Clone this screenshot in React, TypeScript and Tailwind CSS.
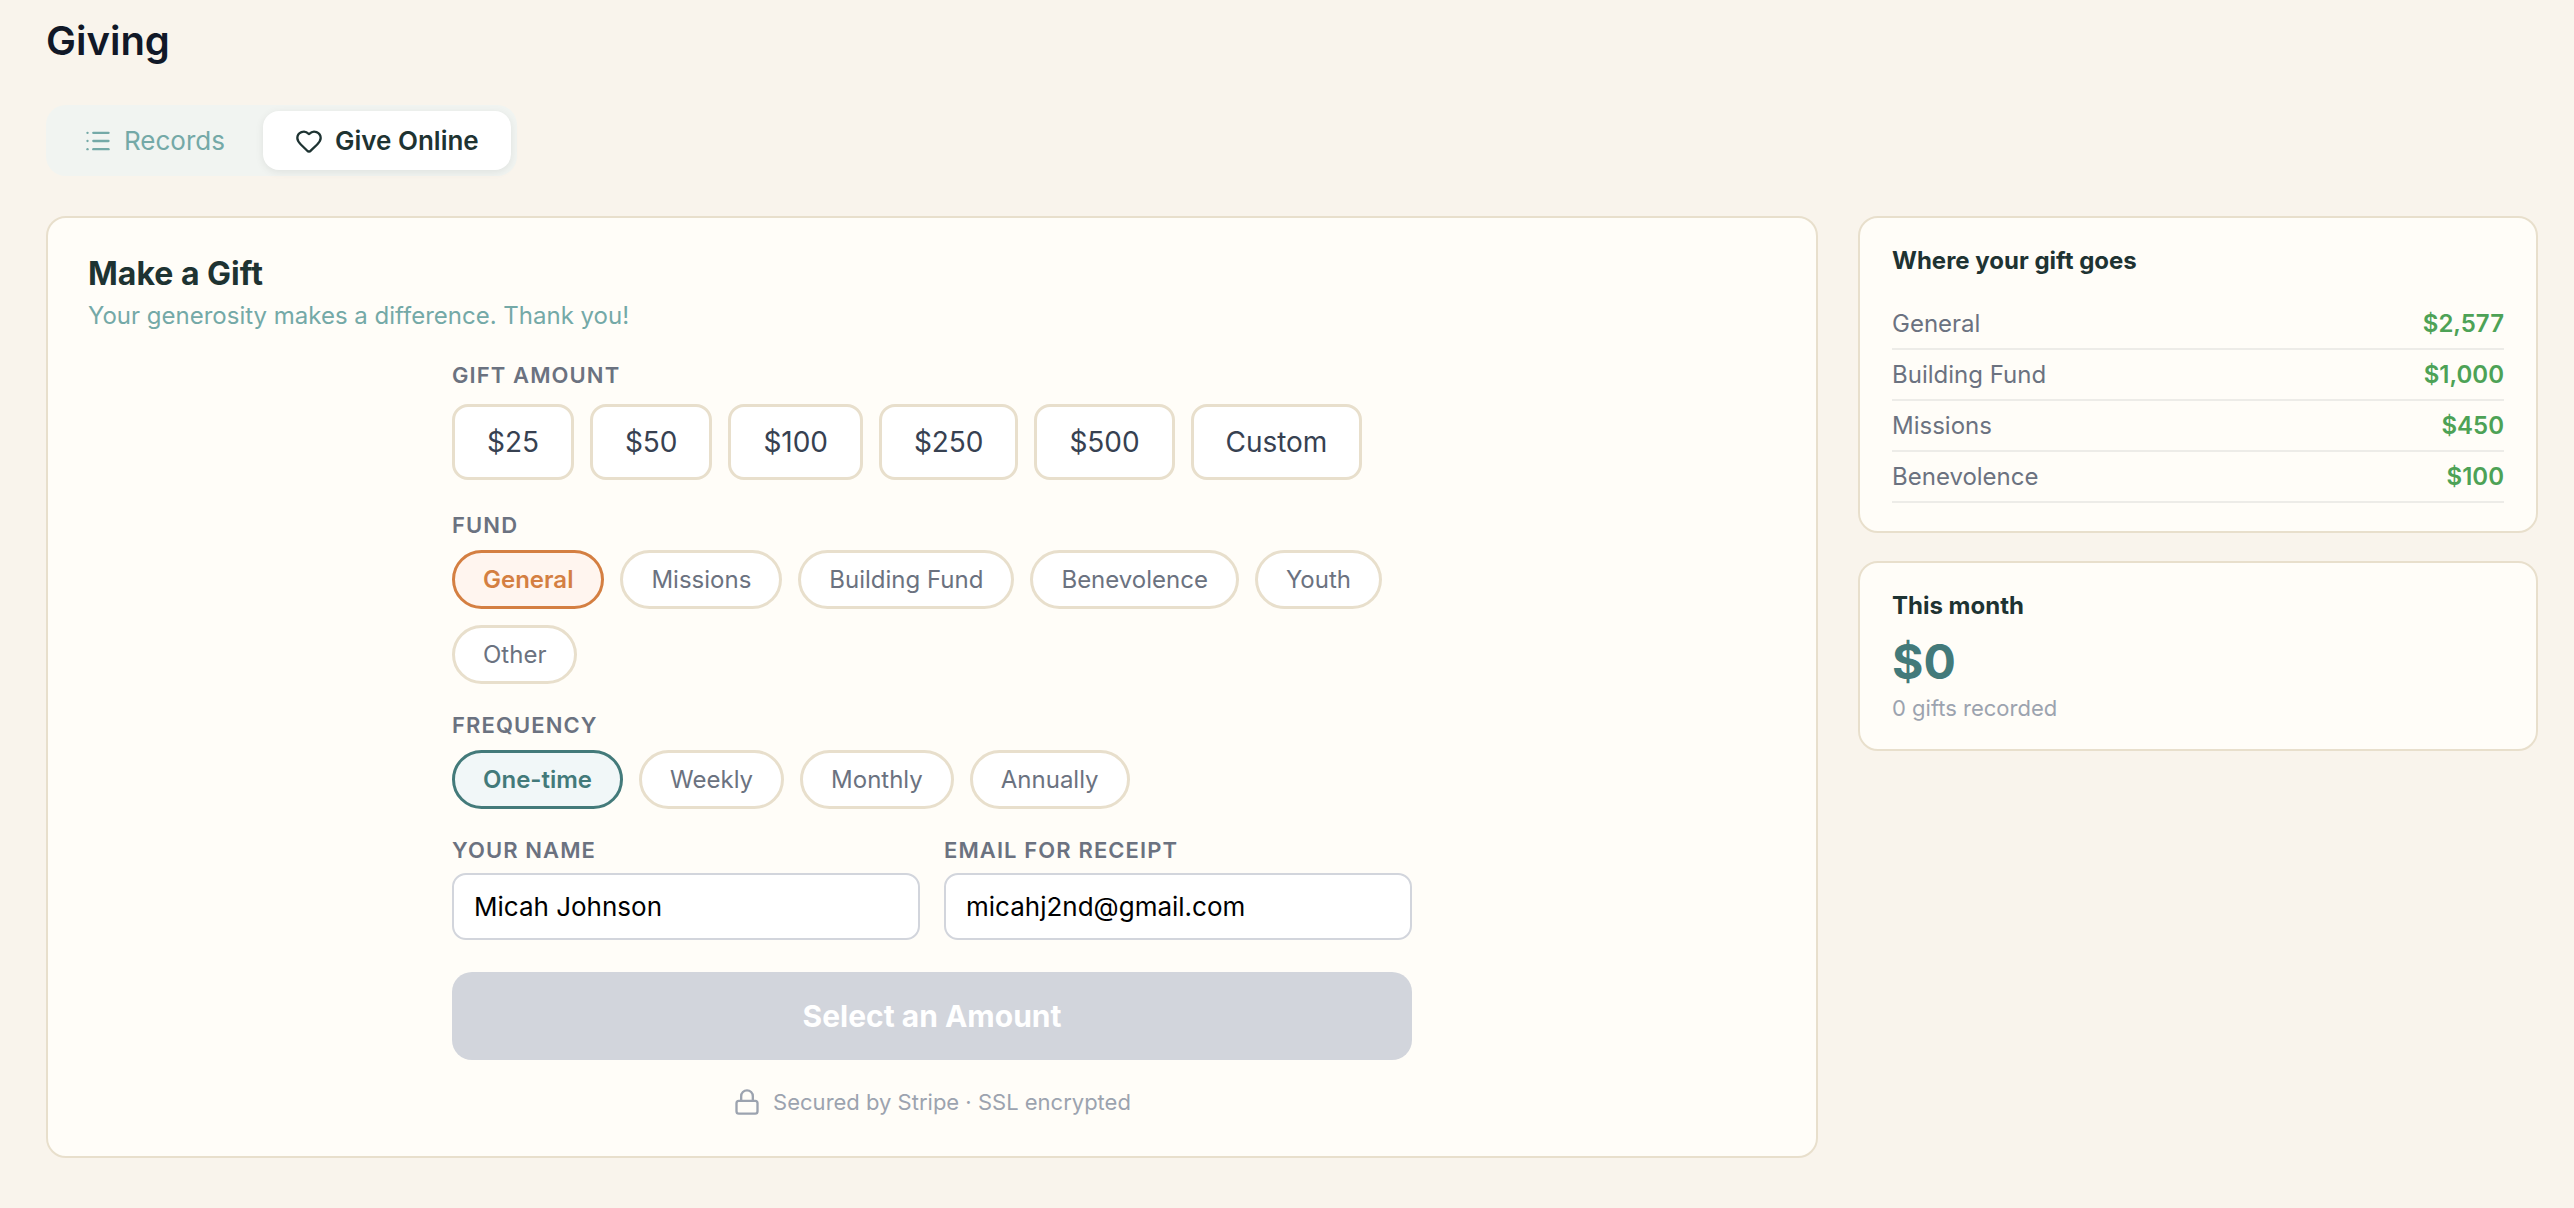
import { useState } from "react";
import { clsx } from "clsx";
import { Heart, List, Lock } from "lucide-react";

const amounts = ["$25", "$50", "$100", "$250", "$500", "Custom"];
const funds = ["General", "Missions", "Building Fund", "Benevolence", "Youth", "Other"];
const frequencies = ["One-time", "Weekly", "Monthly", "Annually"];

const fundTotals = [
  { name: "General", total: "$2,577" },
  { name: "Building Fund", total: "$1,000" },
  { name: "Missions", total: "$450" },
  { name: "Benevolence", total: "$100" },
];

function Label({ children }: { children: string }) {
  return (
    <div className="text-[22px] leading-[26px] font-semibold uppercase tracking-[0.05em] text-[#6b7280]">
      {children}
    </div>
  );
}

function Pill({ label, active, tone, onClick }: { label: string; active: boolean; tone: "orange" | "teal"; onClick: () => void }) {
  return (
    <button
      onClick={onClick}
      className={clsx(
        "h-[59px] rounded-full border-[3px] px-7 text-2xl leading-[29px]",
        !active && "border-[#e8dfcc] bg-white text-[#6b7280]",
        active && tone === "orange" && "border-[#d47f42] bg-[#fff5ef] font-semibold text-[#d47f42]",
        active && tone === "teal" && "border-[#437a7a] bg-[#f1f7f8] font-semibold text-[#437a7a]",
      )}
    >
      {label}
    </button>
  );
}

export default function App() {
  const [amount, setAmount] = useState("");
  const [fund, setFund] = useState("General");
  const [frequency, setFrequency] = useState("One-time");
  const [name, setName] = useState("Micah Johnson");
  const [email, setEmail] = useState("micahj2nd@gmail.com");

  return (
    <div className="min-h-screen bg-[#f9f4ec] pt-[17px] pr-9 pl-[46px] font-['Inter',sans-serif] [font-optical-sizing:none]">
      <h1 className="text-[40px] leading-[48px] font-semibold text-[#111827]">Giving</h1>

      {/* Tabs */}
      <div className="mt-10 flex w-fit gap-1.5 rounded-[20px] bg-[#f1f4f1] p-1.5">
        <button className="flex h-[59px] items-center gap-3 rounded-2xl px-8 text-[26px] text-[#74a9a7]">
          <List size={28} />
          Records
        </button>
        <button className="flex h-[59px] items-center gap-3 rounded-2xl bg-white px-8 text-[26px] font-semibold text-[#1e3332] shadow-[0_2px_8px_rgba(0,0,0,0.08)]">
          <Heart size={28} />
          Give Online
        </button>
      </div>

      <div className="mt-10 flex items-start gap-10">
        {/* Gift form */}
        <section className="h-[942px] w-[1772px] rounded-[20px] border-2 border-[#e8dfcc] bg-[#fffdf8] px-10 pt-9">
          <h2 className="text-[32px] leading-[39px] font-bold text-[#1e3332]">Make a Gift</h2>
          <p className="mt-2 text-2xl leading-[29px] text-[#74a9a7]">Your generosity makes a difference. Thank you!</p>

          <div className="mx-auto mt-8 w-[960px]">
            <Label>Gift Amount</Label>
            <div className="mt-4 flex gap-4">
              {amounts.map((a) => (
                <button
                  key={a}
                  onClick={() => setAmount(a)}
                  className="h-[76px] rounded-2xl border-[3px] border-[#e8dfcc] bg-white px-8 text-[28px] tracking-[-0.05px] text-[#374151]"
                >
                  {a}
                </button>
              ))}
            </div>

            <div className="mt-8">
              <Label>Fund</Label>
              <div className="mt-3 flex flex-wrap gap-4">
                {funds.map((f) => (
                  <Pill key={f} label={f} tone="orange" active={f === fund} onClick={() => setFund(f)} />
                ))}
              </div>
            </div>

            <div className="mt-7">
              <Label>Frequency</Label>
              <div className="mt-3 flex gap-4">
                {frequencies.map((f) => (
                  <Pill key={f} label={f} tone="teal" active={f === frequency} onClick={() => setFrequency(f)} />
                ))}
              </div>
            </div>

            <div className="mt-7 grid grid-cols-2 gap-6">
              <div>
                <Label>Your Name</Label>
                <input
                  value={name}
                  onChange={(e) => setName(e.target.value)}
                  className="mt-2.5 block h-[67px] w-full rounded-[14px] border-2 border-[#d2d5dc] bg-white px-5 text-[26px] text-black"
                />
              </div>
              <div>
                <Label>Email for Receipt</Label>
                <input
                  value={email}
                  onChange={(e) => setEmail(e.target.value)}
                  className="mt-2.5 block h-[67px] w-full rounded-[14px] border-2 border-[#d2d5dc] bg-white px-5 text-[26px] text-black"
                />
              </div>
            </div>

            <button className="mt-8 block h-[88px] w-full rounded-[20px] bg-[#d2d5dc] text-[30px] font-bold text-white">
              {amount ? `Give ${amount}` : "Select an Amount"}
            </button>

            <div className="mt-7 flex items-center justify-center gap-3 text-[22px] leading-7 text-[#9ca3af]">
              <Lock size={28} />
              Secured by Stripe · SSL encrypted
            </div>
          </div>
        </section>

        {/* Sidebar */}
        <aside className="flex w-[680px] flex-col gap-7">
          <section className="rounded-[20px] border-2 border-[#e8dfcc] bg-[#fffdf8] px-8 py-7">
            <h3 className="mb-6 text-2xl leading-[29px] font-bold text-[#1e3332]">Where your gift goes</h3>
            {fundTotals.map((row) => (
              <div key={row.name} className="flex justify-between border-b-2 border-[#edece8] py-2.5 text-2xl leading-[29px]">
                <span className="text-[#6b7280]">{row.name}</span>
                <span className="font-semibold text-[#4da256]">{row.total}</span>
              </div>
            ))}
          </section>

          <section className="h-[190px] rounded-[20px] border-2 border-[#e8dfcc] bg-[#fffdf8] px-8 pt-7">
            <h3 className="text-2xl leading-[29px] font-bold text-[#1e3332]">This month</h3>
            <div className="mt-[13px] text-5xl leading-[58px] font-bold text-[#437a7a]">$0</div>
            <div className="mt-1 text-[22px] leading-[27px] text-[#9ca3af]">0 gifts recorded</div>
          </section>
        </aside>
      </div>
    </div>
  );
}
